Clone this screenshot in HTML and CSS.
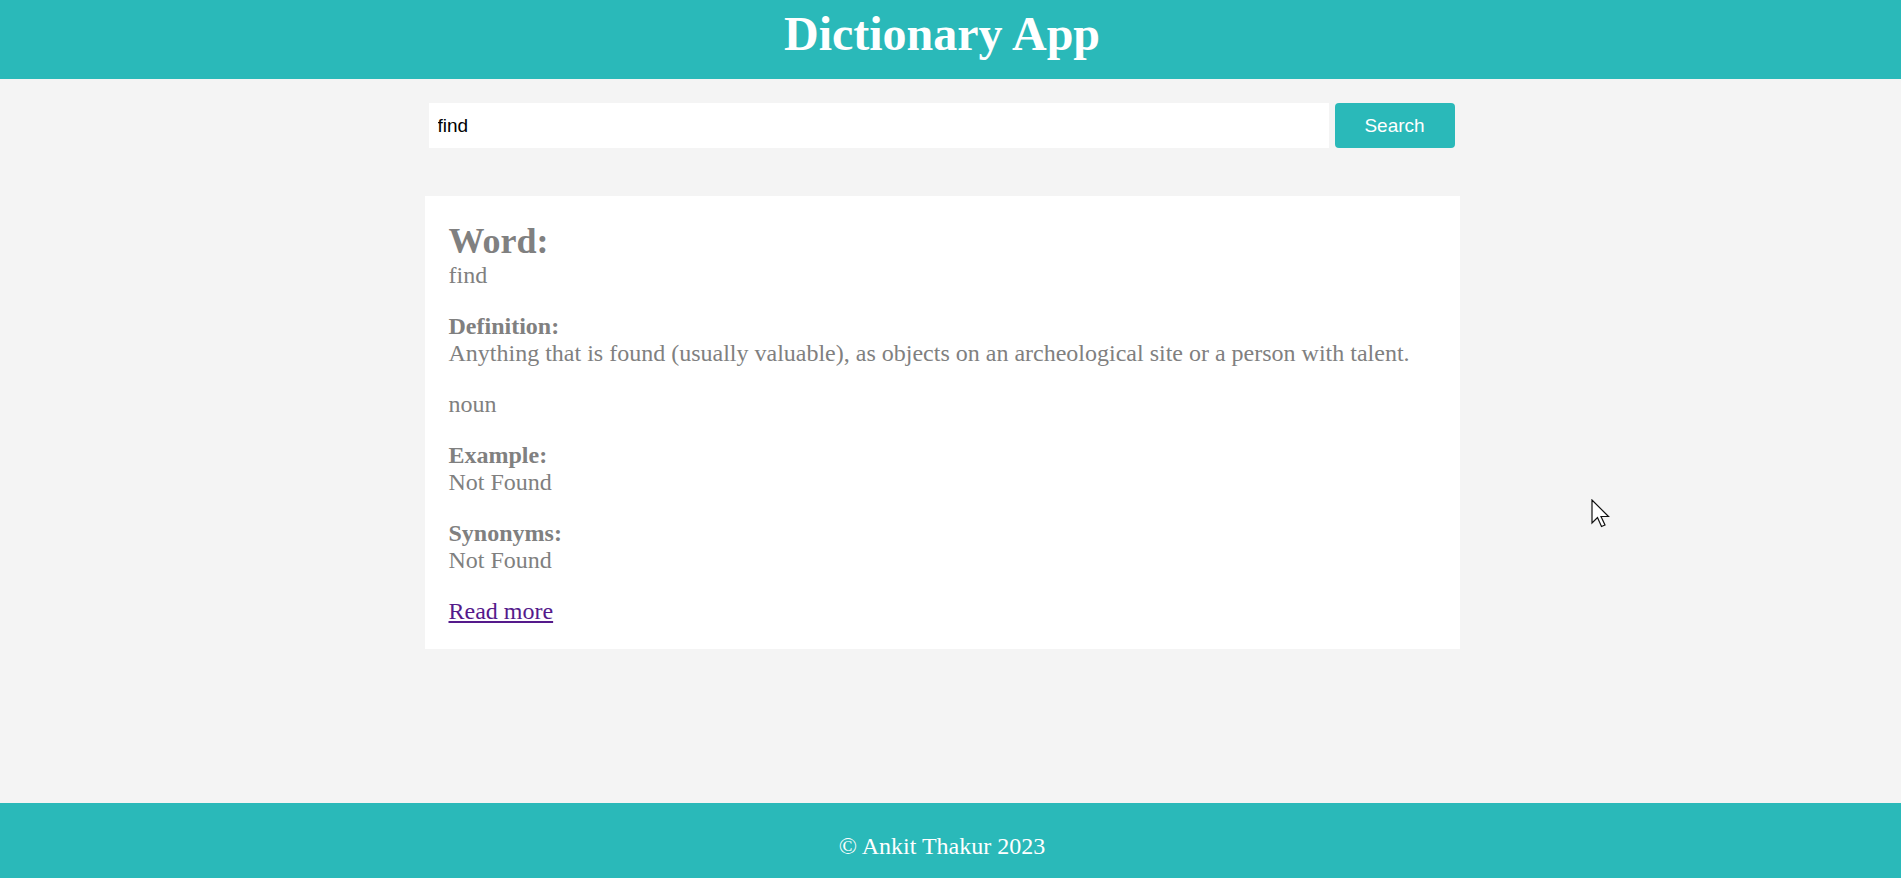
FILE: index.html
```html
<!DOCTYPE html>
<html lang="en">
<head>
<meta charset="utf-8">
<title>Dictionary App</title>
<link rel="stylesheet" href="styles.css">
</head>
<body>
<header class="site-header">
  <h1 class="site-title">Dictionary App</h1>
</header>
<main class="site-main">
  <div class="container">
    <form class="search-form">
      <input class="search-input" type="text" value="find">
      <button class="search-btn" type="button">Search</button>
    </form>
    <section class="result-card">
      <h2 class="word-title">Word:</h2>
      <p class="entry first">find</p>
      <p class="entry"><strong>Definition:</strong><br>Anything that is found (usually valuable), as objects on an archeological site or a person with talent.</p>
      <p class="entry">noun</p>
      <p class="entry"><strong>Example:</strong><br>Not Found</p>
      <p class="entry"><strong>Synonyms:</strong><br>Not Found</p>
      <p class="entry"><a class="read-more" href="#">Read more</a></p>
    </section>
  </div>
</main>
<footer class="site-footer">
  <p class="footer-text">&copy; Ankit Thakur 2023</p>
</footer>
<svg class="cursor" width="20" height="29" viewBox="0 0 20 29" aria-hidden="true">
  <path d="M1 1 L1 24 L6.5 18.5 L10.5 27.5 L14 26 L10 17.5 L17.5 17.5 Z" fill="#fff" stroke="#111" stroke-width="1.2" stroke-linejoin="miter"/>
</svg>
</body>
</html>
```
FILE: styles.css
```css
html, body {
  margin: 0;
  padding: 0;
}

body {
  min-height: 100vh;
  display: flex;
  flex-direction: column;
  background: #f4f4f4;
  font-family: "Liberation Serif", "Times New Roman", serif;
  font-size: 24px;
  color: #808080;
  position: relative;
}

.site-header {
  background: #2ab9b9;
  padding: 6px 17px 17px 0;
}

.site-title {
  margin: 0;
  text-align: center;
  color: #ffffff;
  font-size: 48px;
  font-weight: bold;
  line-height: 56px;
}

.site-main {
  flex: 1;
  padding: 24px 17px 0 0;
}

.container {
  width: 1035px;
  margin: 0 auto;
}

.search-form {
  display: flex;
  gap: 6px;
  padding: 0 5px 0 4px;
  margin: 0;
}

.search-input {
  flex: 1;
  height: 45px;
  box-sizing: border-box;
  border: none;
  outline: none;
  background: #ffffff;
  padding: 0 9px;
  font-family: "Liberation Sans", Arial, sans-serif;
  font-size: 19px;
  color: #000;
  margin: 0;
}

.search-btn {
  width: 120px;
  height: 45px;
  border: none;
  border-radius: 4px;
  background: #2ab9b9;
  color: #ffffff;
  font-family: "Liberation Sans", Arial, sans-serif;
  font-size: 19px;
  padding: 0;
  margin: 0;
}

.result-card {
  margin-top: 48px;
  background: #ffffff;
  padding: 24px;
}

.word-title {
  margin: 0;
  font-size: 36px;
  font-weight: bold;
  line-height: normal;
}

.entry {
  margin: 24px 0 0;
  line-height: 27px;
}

.entry.first {
  margin-top: 0;
}

.read-more {
  color: #551a8b;
}

.site-footer {
  background: #2ab9b9;
  height: 75px;
  box-sizing: border-box;
  padding: 30px 17px 0 0;
}

.footer-text {
  margin: 0;
  text-align: center;
  color: #ffffff;
  line-height: 27px;
}

.cursor {
  position: absolute;
  left: 1591px;
  top: 499px;
}
```
